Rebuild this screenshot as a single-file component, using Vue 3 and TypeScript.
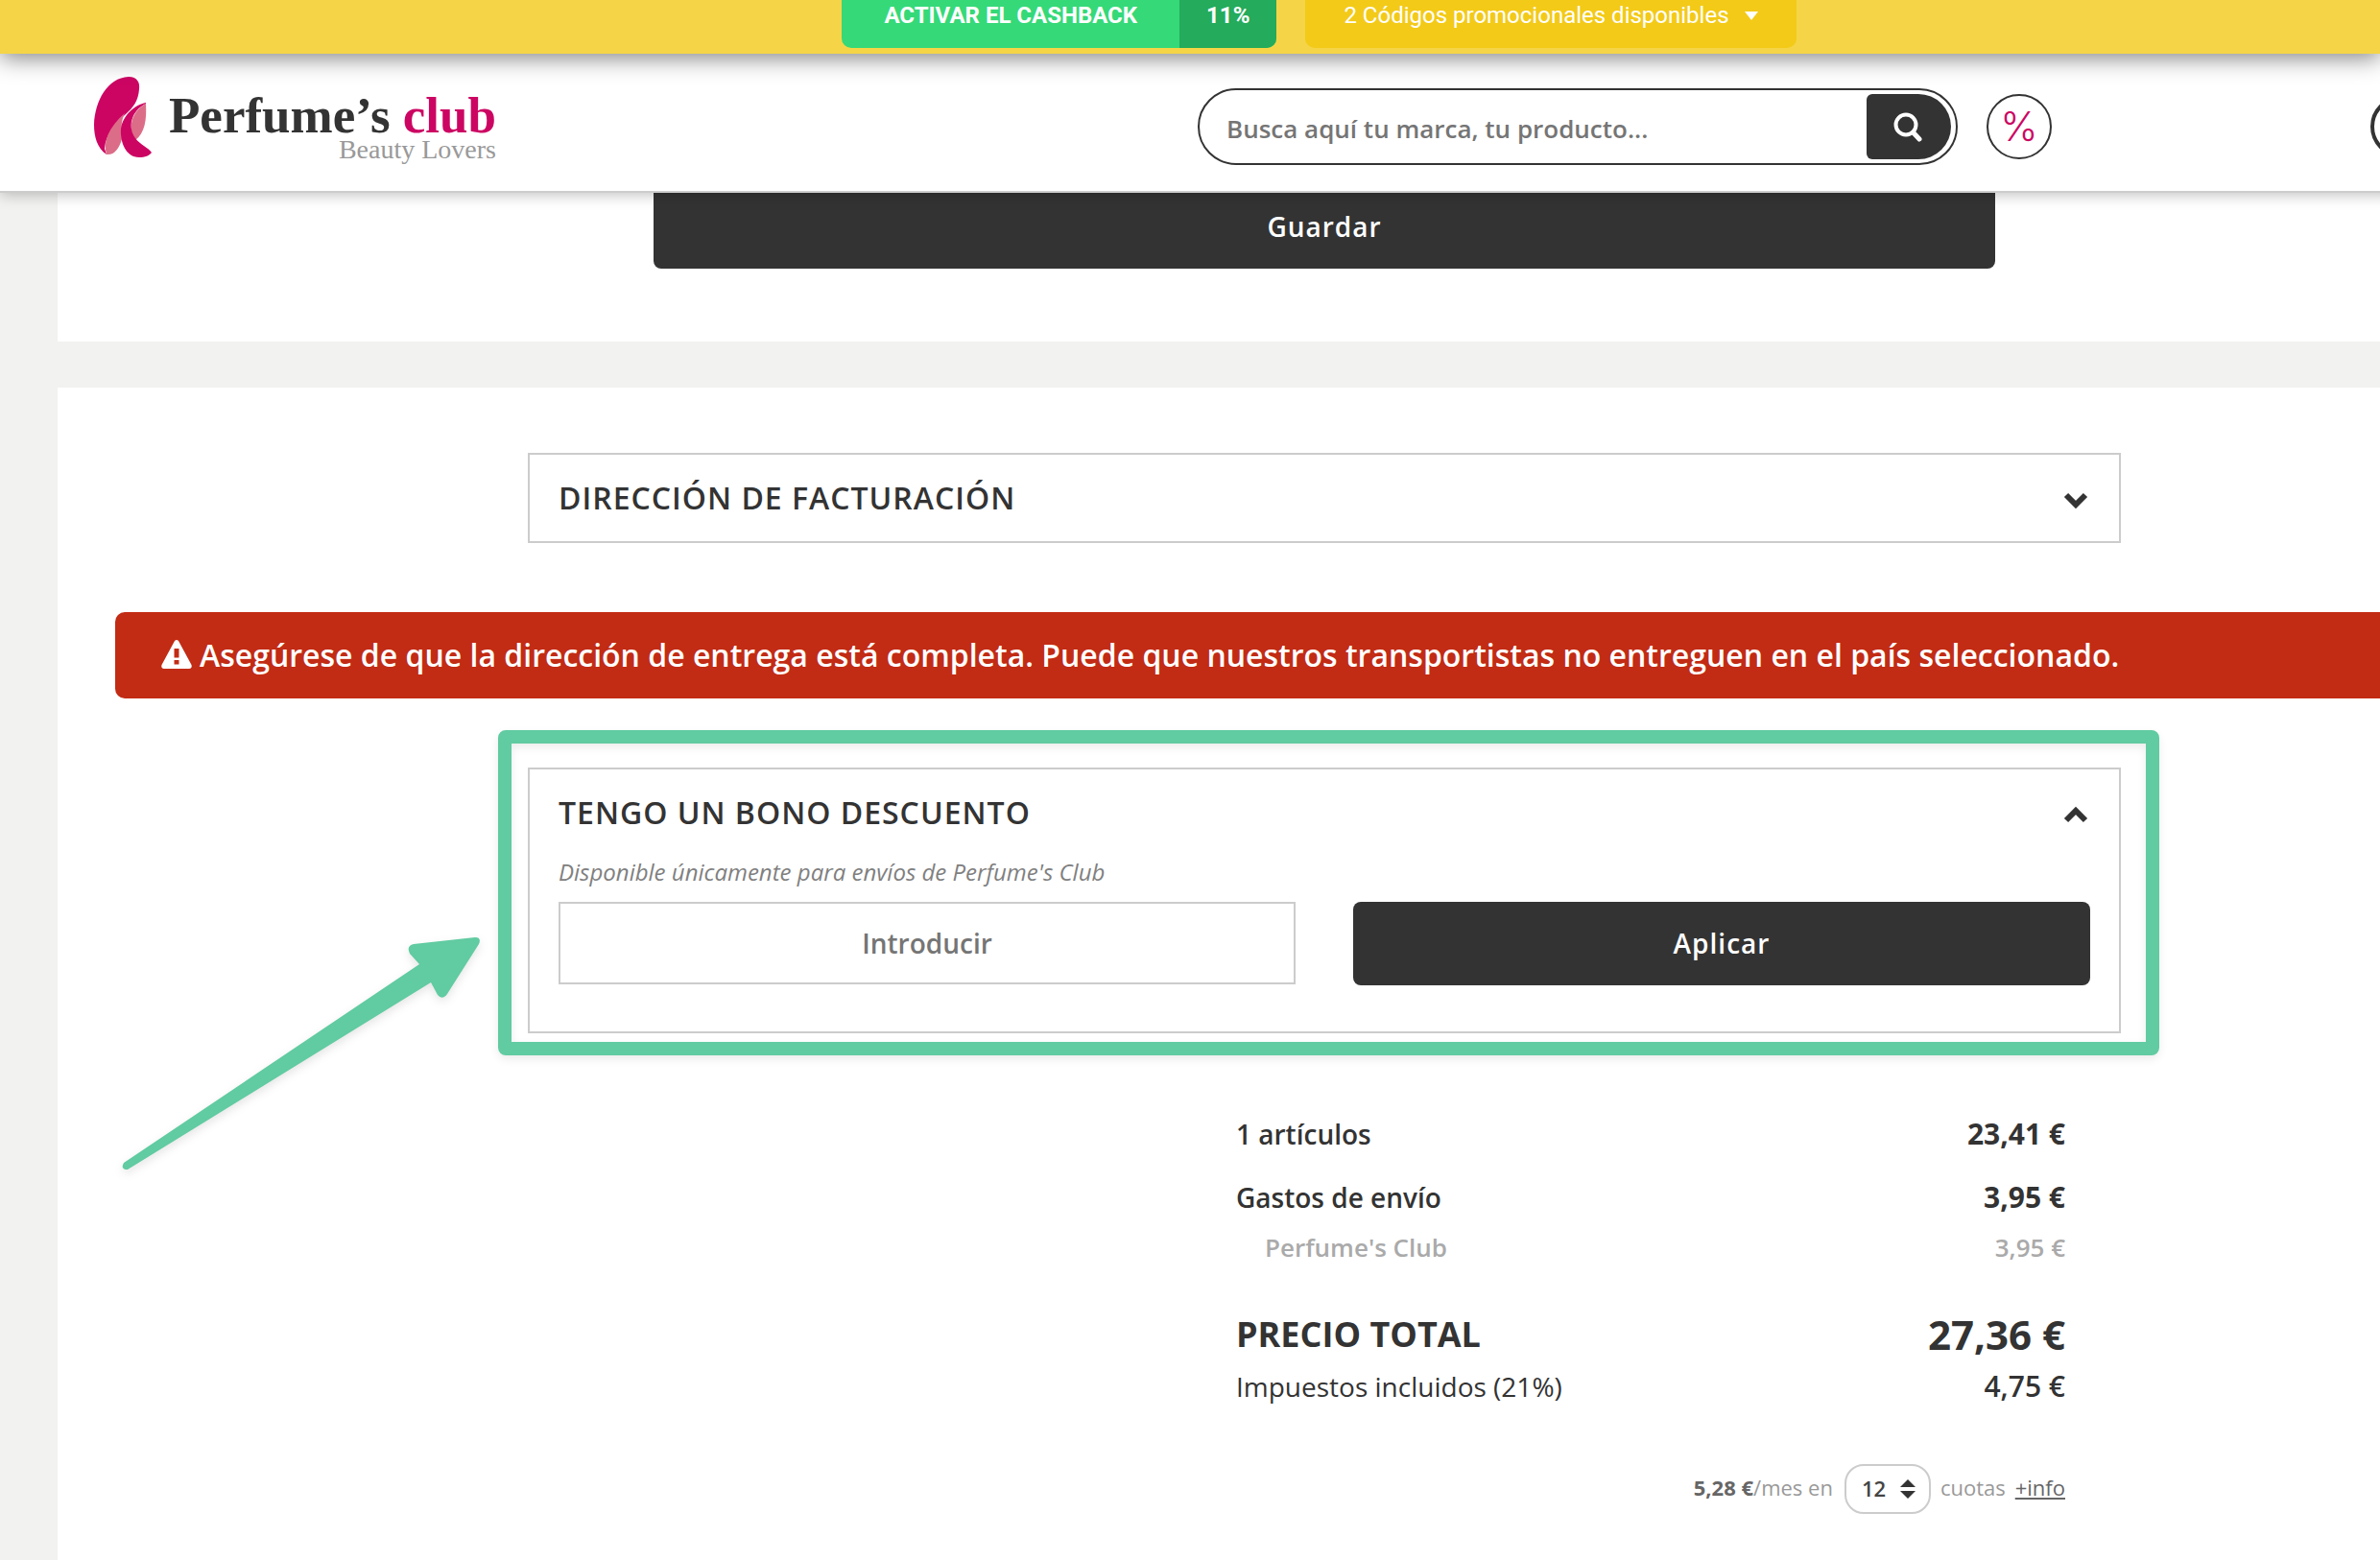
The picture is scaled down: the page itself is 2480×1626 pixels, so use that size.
<script setup lang="ts">
import { ref } from 'vue'

interface SummaryRow {
  label: string
  amount: string
  kind: string
}

const search = ref('')
const voucher = ref('')
const instalments = ref('12')
const billingOpen = ref(false)
const voucherOpen = ref(true)

const rows: SummaryRow[] = [
  { label: '1 artículos', amount: '23,41 €', kind: 'items' },
  { label: 'Gastos de envío', amount: '3,95 €', kind: 'shipping' },
  { label: "Perfume's Club", amount: '3,95 €', kind: 'carrier' },
  { label: 'PRECIO TOTAL', amount: '27,36 €', kind: 'total' },
  { label: 'Impuestos incluidos (21%)', amount: '4,75 €', kind: 'tax' },
]
</script>

<template>
  <div class="page">
    <div class="promo-bar">
      <button type="button" class="cashback">
        <span class="cashback-label">ACTIVAR EL CASHBACK</span>
        <span class="cashback-rate">11%</span>
      </button>
      <button type="button" class="codes">
        2 Códigos promocionales disponibles
        <svg width="14" height="9" viewBox="0 0 14 9" aria-hidden="true"><path d="M0 0h14L7 9z" fill="#fff" /></svg>
      </button>
    </div>

    <header class="site-header">
      <a href="#" class="logo">
        <svg class="logo-mark" width="62" height="86" viewBox="0 0 62 86" aria-hidden="true">
          <path d="M13 81C3 74 0 62 0 50C1 25 14 1 36 0C45 0 48 6 47 13C46 25 41 32 33 39C22 49 12 60 11 75Z" fill="#cc0563" />
          <path d="M13 81C9 68 15 53 32 38C28 46 28 55 29 65C26 75 21 82 13 81Z" fill="#dc6d88" />
          <path d="M54 28C55 44 53 59 43 66C36 58 36 38 54 28Z" fill="#dc6d88" />
          <path d="M54 27C43 29 30 40 28 54C27 68 33 84 47 84C53 84 58 82 60 79C57 74 48 71 43 64C35 53 38 36 54 28Z" fill="#cc0563" />
        </svg>
        <span class="logo-text">
          <span class="logo-name">Perfume’s <span class="logo-club">club</span></span>
          <span class="logo-tag">Beauty Lovers</span>
        </span>
      </a>

      <form class="search" role="search" @submit.prevent>
        <input v-model="search" type="text" aria-label="Buscar" placeholder="Busca aquí tu marca, tu producto..." />
        <button type="submit" aria-label="Buscar">
          <svg width="32" height="32" viewBox="0 0 32 32" fill="none" stroke="#fff" aria-hidden="true">
            <circle cx="13" cy="14" r="10.500" stroke-width="4" />
            <path d="M20.500 22L27 29" stroke-width="5" stroke-linecap="round" />
          </svg>
        </button>
      </form>
      <a href="#" class="offers" aria-label="Ofertas">%</a>
      <a href="#" class="account" aria-label="Mi cuenta"></a>
    </header>

    <main>
      <section class="card card-address">
        <button type="button" class="btn save">Guardar</button>
      </section>

      <section class="card card-checkout">
        <div class="panel">
          <button type="button" class="panel-title" :aria-expanded="billingOpen" @click="billingOpen = !billingOpen">
            <span>DIRECCIÓN DE FACTURACIÓN</span>
            <svg width="26" height="18" viewBox="0 0 26 18" aria-hidden="true"><path d="M3 4l10 10L23 4" fill="none" stroke="#333" stroke-width="6" /></svg>
          </button>
        </div>

        <div class="alert" role="alert">
          <svg width="32" height="30" viewBox="0 0 32 30" aria-hidden="true">
            <path fill="#fff" fill-rule="evenodd" d="M14 1Q16-1 18 1L31.500 26Q32.500 30 29 30H3Q-.5 30 .5 26ZM13.500 9V18.500H18.500V9ZM13.500 21V25.500H18.500V21Z" />
          </svg>
          <span>Asegúrese de que la dirección de entrega está completa. Puede que nuestros transportistas no entreguen en el país seleccionado.</span>
        </div>

        <div class="panel">
          <button type="button" class="panel-title" :aria-expanded="voucherOpen" @click="voucherOpen = !voucherOpen">
            <span>TENGO UN BONO DESCUENTO</span>
            <svg width="26" height="18" viewBox="0 0 26 18" aria-hidden="true"><path d="M3 15L13 5l10 10" fill="none" stroke="#333" stroke-width="6" /></svg>
          </button>
          <form v-if="voucherOpen" class="voucher" @submit.prevent>
            <label for="voucher" class="voucher-note">Disponible únicamente para envíos de Perfume's Club</label>
            <div class="voucher-row">
              <input id="voucher" v-model="voucher" type="text" placeholder="Introducir" />
              <button type="submit" class="btn">Aplicar</button>
            </div>
          </form>
          <div class="highlight" aria-hidden="true"></div>
          <svg class="arrow" width="380" height="250" viewBox="0 0 380 250" aria-hidden="true">
            <path d="M5 238L313 31L303 20Q299 12 307 10L371 3Q378 3 375 10L342 62Q337 69 332 63L325 50L9 245Q1 245 5 238Z" fill="#61cba1" />
          </svg>
        </div>

        <div class="summary">
          <table>
            <tbody>
              <tr v-for="row in rows" :key="row.kind" :class="row.kind">
                <th scope="row">{{ row.label }}</th>
                <td>{{ row.amount }}</td>
              </tr>
            </tbody>
          </table>
          <div class="finance">
            <span class="finance-text"><strong>5,28 €</strong>/mes en</span>
            <span class="select">
              <select v-model="instalments" aria-label="Número de cuotas">
                <option>3</option>
                <option>6</option>
                <option>12</option>
              </select>
              <svg width="16" height="20" viewBox="0 0 16 20" aria-hidden="true"><path d="M8 0l8 8H0zM0 12h16l-8 8z" fill="#333" /></svg>
            </span>
            <span class="finance-text">cuotas</span>
            <a href="#" class="finance-text">+info</a>
          </div>
        </div>
      </section>
    </main>
  </div>
</template>

<style>
body {
  margin: 0;
}
</style>

<style scoped>
.page {
  display: flex;
  flex-direction: column;
  min-height: 100vh;
  overflow: hidden;
  background: #f2f2f0;
  color: #333;
  font-family: "Open Sans", "Noto Sans", sans-serif;
}

*,
*::before,
*::after {
  box-sizing: border-box;
}

button,
input,
select {
  margin: 0;
  padding: 0;
  border: 0;
  background: none;
  color: inherit;
  font: inherit;
}

a {
  color: inherit;
  text-decoration: none;
}

svg {
  display: block;
  flex: none;
}

.promo-bar {
  position: relative;
  z-index: 3;
  display: flex;
  justify-content: center;
  align-items: flex-start;
  gap: 30px;
  height: 56px;
  padding-left: 269px;
  background: #f5d547;
  box-shadow: 0 4px 24px rgba(0, 0, 0, 0.5);
}

.cashback,
.codes {
  display: flex;
  height: 50px;
  border-radius: 0 0 10px 10px;
  overflow: hidden;
  color: #fff;
  font-family: Roboto, sans-serif;
  font-size: 24px;
  line-height: 32px;
  white-space: nowrap;
}

.cashback {
  background: #35d978;
  font-weight: 700;
}

.cashback span {
  height: 50px;
}

.cashback-label {
  padding: 0 44px;
}

.cashback-rate {
  padding: 0 28px;
  background: #24ab5b;
}

.codes {
  gap: 16px;
  padding: 0 40px;
  background: #f3ca18;
}

.codes svg {
  margin-top: 12px;
}

.site-header {
  position: relative;
  z-index: 2;
  display: flex;
  align-items: center;
  height: 145px;
  margin-right: -54px;
  padding: 9px 0 0 98px;
  border-bottom: 2px solid #ccc;
  background: #fff;
  box-shadow: 0 2px 14px rgba(0, 0, 0, 0.25);
}

.logo {
  display: flex;
  gap: 16px;
  padding-bottom: 17px;
}

.logo-text {
  display: flex;
  flex-direction: column;
  font-family: "Liberation Serif", serif;
}

.logo-name {
  padding-top: 16px;
  font-size: 53px;
  font-weight: 700;
  line-height: 48px;
}

.logo-club {
  color: #cc0563;
}

.logo-tag {
  color: #999;
  font-size: 28px;
  line-height: 24px;
  text-align: right;
}

.search {
  display: flex;
  align-items: center;
  width: 792px;
  height: 80px;
  margin-left: auto;
  padding-right: 5px;
  border: 2px solid #333;
  border-radius: 40px;
}

.search input {
  flex: 1;
  min-width: 0;
  height: 76px;
  padding: 4px 0 0 28px;
  outline: 0;
  font-size: 26px;
  font-weight: 600;
}

.search input::placeholder,
.voucher input::placeholder {
  color: #757575;
  opacity: 1;
}

.search button {
  display: flex;
  align-items: center;
  justify-content: center;
  width: 88px;
  height: 68px;
  border-radius: 6px 34px 34px 6px;
  background: #333;
}

.offers {
  display: flex;
  align-items: center;
  justify-content: center;
  width: 68px;
  height: 68px;
  margin-left: 30px;
  border: 2px solid #333;
  border-radius: 50%;
  color: #cc0563;
  font-family: Inter, sans-serif;
  font-size: 42px;
  font-weight: 300;
  line-height: 64px;
}

.account {
  width: 64px;
  height: 64px;
  margin-left: 332px;
  border: 4px solid #333;
  border-radius: 50%;
}

main {
  display: flex;
  flex: 1;
  flex-direction: column;
  gap: 48px;
  margin: 0 -220px 0 60px;
}

.card {
  padding: 0 60px;
  background: #fff;
}

.card-address {
  padding-bottom: 76px;
}

.card-checkout {
  flex: 1;
  padding-top: 68px;
  padding-bottom: 40px;
}

.btn {
  display: block;
  height: 87px;
  padding-bottom: 2px;
  border-radius: 8px;
  background: #333;
  color: #fff;
  font-size: 28px;
  font-weight: 600;
  letter-spacing: 1px;
}

.save {
  width: 1398px;
  margin: -8px auto 0;
}

.panel,
.summary {
  position: relative;
  width: 1660px;
  margin: 0 auto;
}

.panel {
  border: 2px solid #ccc;
}

.panel-title {
  display: flex;
  align-items: center;
  justify-content: space-between;
  width: 100%;
  height: 90px;
  padding: 0 32px 0 30px;
  font-size: 32px;
  font-weight: 600;
  letter-spacing: 1px;
}

.panel-title span {
  padding-bottom: 2px;
}

.panel-title svg {
  margin-top: 4px;
}

.alert {
  display: flex;
  align-items: center;
  gap: 8px;
  height: 90px;
  margin: 72px 0;
  padding: 0 48px 2px;
  border-radius: 10px;
  background: #c22b14;
  color: #fff;
  font-size: 32px;
  font-weight: 600;
  white-space: nowrap;
}

.voucher {
  padding: 0 30px 48px;
}

.voucher-note {
  display: block;
  height: 48px;
  color: #808080;
  font-size: 24px;
  font-style: italic;
  line-height: 34px;
}

.voucher-row {
  display: grid;
  grid-template-columns: 1fr 1fr;
  gap: 60px;
}

.voucher input {
  width: 100%;
  height: 86px;
  border: 2px solid #ccc;
  font-size: 28px;
  font-weight: 600;
  text-align: center;
}

.highlight {
  position: absolute;
  inset: -41px -42px -25px -33px;
  border: 14px solid #61cba1;
  border-radius: 8px;
  box-shadow: 0 4px 10px rgba(0, 0, 0, 0.08), inset 0 4px 10px rgba(0, 0, 0, 0.08);
  pointer-events: none;
}

.arrow {
  position: absolute;
  top: 172px;
  left: -428px;
  filter: drop-shadow(0 4px 5px rgba(0, 0, 0, 0.1));
  pointer-events: none;
}

.summary {
  padding: 85px 58px 0 738px;
}

.summary table {
  width: 100%;
  border-collapse: collapse;
}

.summary th,
.summary td {
  padding: 0;
  font-size: 28px;
  font-weight: 600;
  line-height: 40px;
  text-align: left;
}

.summary td {
  font-size: 30px;
  font-weight: 700;
  text-align: right;
}

.summary .items th,
.summary .items td {
  padding-bottom: 26px;
}

.summary .shipping th,
.summary .shipping td {
  padding-bottom: 14px;
}

.summary .carrier th,
.summary .carrier td {
  padding-bottom: 45px;
  color: #aaa;
  font-size: 26px;
  font-weight: 600;
  line-height: 36px;
}

.summary .carrier th {
  padding-left: 30px;
}

.summary .total th,
.summary .total td {
  padding-bottom: 6px;
  font-size: 42px;
  font-weight: 700;
  line-height: 56px;
}

.summary .total th {
  font-size: 36px;
}

.summary .tax th {
  font-weight: 400;
}

.summary .tax td {
  font-weight: 600;
}

.finance {
  display: flex;
  align-items: center;
  justify-content: flex-end;
  margin-top: 61px;
  color: #999;
  font-size: 22px;
  line-height: 32px;
}

.finance-text {
  padding-bottom: 5px;
}

.finance strong,
.finance a {
  color: #666;
}

.finance a {
  margin-left: 10px;
  text-decoration: underline;
}

.select {
  position: relative;
  margin: 0 10px 0 12px;
}

.select select {
  display: block;
  width: 90px;
  height: 52px;
  padding: 0 0 2px 16px;
  border: 2px solid #ccc;
  border-radius: 20px;
  appearance: none;
  color: #444;
  font-weight: 600;
}

.select svg {
  position: absolute;
  top: 16px;
  right: 16px;
  pointer-events: none;
}
</style>
